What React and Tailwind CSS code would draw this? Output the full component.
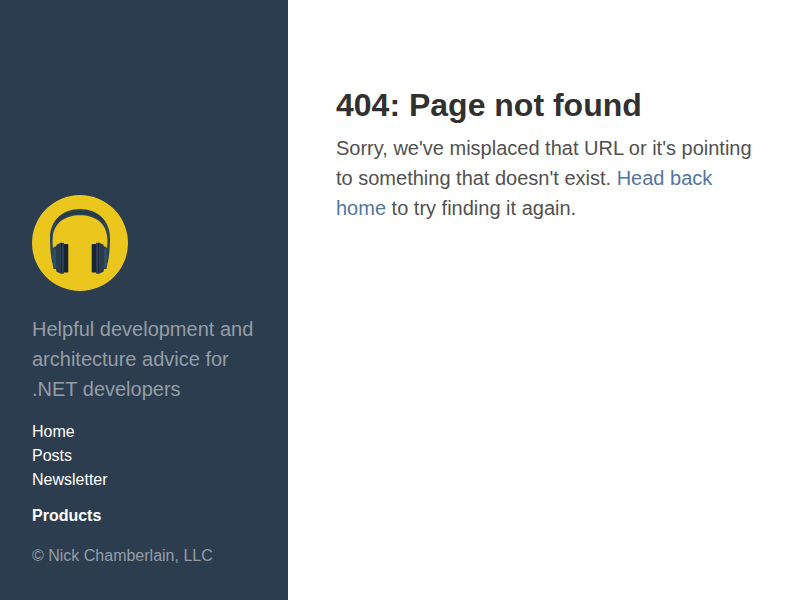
function Logo() {
  return (
    <svg viewBox="0 0 96 96" className="block size-24" role="img" aria-label="Headphones">
      <circle cx="48" cy="48" r="48" fill="#ebc61c" />
      <path
        d="M20.300 68C18.800 62 18 52 18 43C18 25 31 14 48 14C65 14 78 25 78 43C78 52 77.200 62 75.700 68L73 66L75.200 52C75.500 49 75.500 45 75.200 42C74 28 63 20.300 48 20.300C33 20.300 22 28 20.800 42C20.500 45 20.500 49 20.800 52L23 66Z"
        fill="#2b4552"
      />
      <path d="M24 27C29 20.500 38 17.500 48 17.500C58 17.500 67 20.500 72 27" fill="none" stroke="#263746" strokeWidth="2.500" />
      <rect x="31" y="49" width="5.300" height="28.500" rx="0.800" fill="#182530" />
      <rect x="59.700" y="49" width="5.300" height="28.500" rx="0.800" fill="#182530" />
      <path d="M32 48V78.500H28L25.500 77L24 74H21.500L20.300 67V54L22.500 51.500H24L26 49L29 47.500Z" fill="#2c4352" />
      <path d="M64 48V78.500H68L70.500 77L72 74H74.500L75.700 67V54L73.500 51.500H72L70 49L67 47.500Z" fill="#2c4352" />
      <path d="M26.500 49.500V77M69.500 49.500V77" stroke="#293a4a" strokeWidth="4" />
      <path d="M22.500 54V72M73.500 54V72" stroke="#31556a" strokeWidth="2" />
      <path d="M29.500 48V78.500M66.500 48V78.500" stroke="#1c2b38" strokeWidth="1" />
      <path d="M31 48V78.500M65 48V78.500" stroke="#2b3e56" strokeWidth="1.500" />
    </svg>
  );
}

export default function App() {
  return (
    <div className="flex min-h-screen bg-white font-['Liberation_Sans',Arial,sans-serif] text-[#515151]">
      <aside className="flex w-72 shrink-0 flex-col justify-end bg-[#2c3d4f] px-8 pb-8 text-[#959da6]">
        <Logo />
        <p className="mt-[23px] text-xl/[30px]">
          Helpful development and architecture advice for .NET developers
        </p>
        <nav className="mt-4 flex flex-col items-start text-base/6 text-white">
          <a href="#home">Home</a>
          <a href="#posts">Posts</a>
          <a href="#newsletter">Newsletter</a>
          <a href="#products" className="mt-3 font-bold">Products</a>
        </nav>
        <p className="mt-4 text-base/6">© Nick Chamberlain, LLC</p>
      </aside>
      <main className="min-w-0 flex-1 px-12 pt-[85px]">
        <h1 className="mb-2 text-[32px]/10 font-bold text-[#313131]">404: Page not found</h1>
        <p className="max-w-xl text-xl/[30px]">
          Sorry, we've misplaced that URL or it's pointing to something that doesn't exist.{" "}
          <a href="#home" className="text-[#53769f]">Head back home</a> to try finding it again.
        </p>
      </main>
    </div>
  );
}
